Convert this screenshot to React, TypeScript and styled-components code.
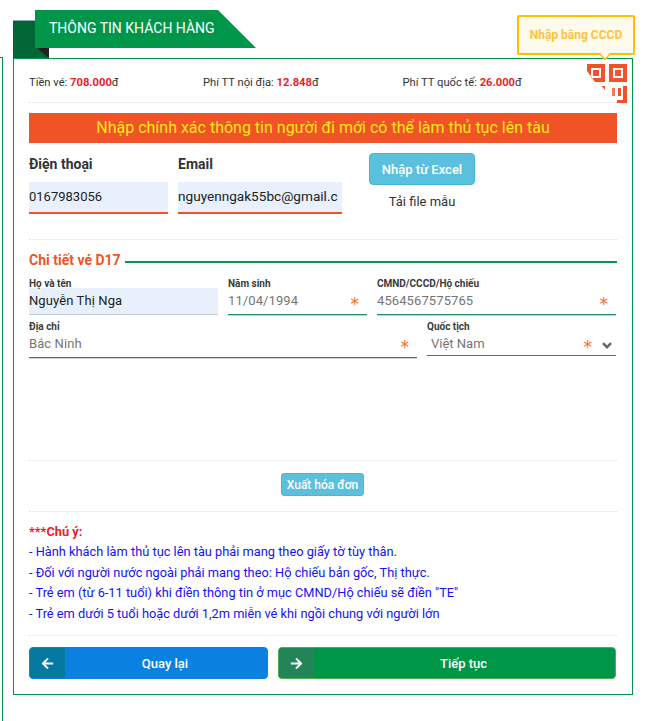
import styled, { createGlobalStyle } from "styled-components";
import { FaArrowLeft, FaArrowRight } from "react-icons/fa";

const GlobalStyle = createGlobalStyle`
  html, body {
    margin: 0;
    padding: 0;
    background: #fff;
    font-family: Roboto, "Liberation Sans", sans-serif;
    color: #333;
  }
`;

const Page = styled.div`
  display: flex;
  align-items: flex-start;
  width: 648px;
  height: 721px;
  overflow: hidden;
`;
const PrevEdge = styled.div`
  width: 2px;
  height: 664px;
  margin-top: 57px;
  border-top: 1px solid #00964a;
  border-right: 1px solid #00964a;
  flex: none;
`;
const Panel = styled.div`
  position: relative;
  flex: none;
  box-sizing: border-box;
  width: 620px;
  height: 637px;
  margin: 58px 0 0 10px;
  padding: 0 15px;
  border: 1px solid #00964a;
`;

// ribbon head
const RibbonBack = styled.div`
  position: absolute;
  left: -1px;
  top: -39px;
  width: 36px;
  height: 38px;
  background: #006633;
  border-top: 1px solid #8fa8b5;
  box-sizing: border-box;
`;
const RibbonFold = styled.div`
  position: absolute;
  left: 22px;
  top: -12px;
  width: 13px;
  height: 11px;
  background: #222;
  clip-path: polygon(0 0, 100% 0, 100% 100%);
`;
const Ribbon = styled.div`
  position: absolute;
  left: 21px;
  top: -49px;
  width: 183px;
  height: 38px;
  background: #00964a;
  color: #fff;
  font-size: 14px;
  line-height: 36px;
  padding-left: 14px;
  box-sizing: border-box;
  white-space: nowrap;
`;
const RibbonTail = styled.div`
  position: absolute;
  left: 204px;
  top: -49px;
  width: 38px;
  height: 38px;
  background: #00964a;
  clip-path: polygon(0 0, 100% 100%, 0 100%);
`;

// tooltip + qr
const CcdTip = styled.div`
  position: absolute;
  left: 503px;
  top: -44px;
  width: 118px;
  height: 40px;
  box-sizing: border-box;
  border: 2px solid #ffbf00;
  border-radius: 2px;
  background: #fffbec;
  color: #fdc33e;
  font-size: 12px;
  font-weight: 700;
  line-height: 36px;
  text-align: center;
  &::after {
    content: "";
    position: absolute;
    left: 81px;
    bottom: -7px;
    width: 8px;
    height: 8px;
    background: #fffbec;
    border-right: 2px solid #ffbf00;
    border-bottom: 2px solid #ffbf00;
    transform: rotate(45deg) scale(0.75);
  }
`;
const QrWrap = styled.div`
  position: absolute;
  left: 573px;
  top: 5px;
  width: 40px;
  height: 40px;
  line-height: 0;
`;

const FeeRow = styled.div`
  display: flex;
  height: 44px;
  padding-top: 3px;
  box-sizing: border-box;
  align-items: center;
  font-size: 11.2px;
  color: #333;
  border-bottom: 1px dotted #dfe3df;
`;
const Fee = styled.div<{ $w: number }>`
  width: ${(p) => p.$w}px;
  flex: none;
  b {
    color: #ee1c25;
    font-weight: 700;
  }
`;
const Banner = styled.div`
  height: 30px;
  margin-top: 10px;
  background: #f15327;
  color: #ffe81a;
  font-size: 16px;
  line-height: 30px;
  text-align: center;
`;
const ContactRow = styled.div`
  display: flex;
  margin-top: 10px;
`;
const ContactCol = styled.div<{ $w: number; $mr: number }>`
  width: ${(p) => p.$w}px;
  margin-right: ${(p) => p.$mr}px;
  flex: none;
`;
const ContactLabel = styled.div`
  height: 21px;
  margin-top: 1px;
  margin-bottom: 7px;
  font-size: 14px;
  font-weight: 700;
  line-height: 20px;
  color: #333;
`;
const ContactInput = styled.input<{ $size: number }>`
  display: block;
  width: 100%;
  height: 32px;
  box-sizing: border-box;
  padding: 0 4px 2px 0;
  border: 0;
  border-bottom: 2px solid #f15327;
  outline: 0;
  background: #e8f0fe;
  color: #222;
  font-family: inherit;
  font-size: ${(p) => p.$size}px;
`;
const ExcelButton = styled.button`
  display: block;
  width: 106px;
  height: 32px;
  box-sizing: border-box;
  border: 1px solid #46b8da;
  border-radius: 4px;
  background: #5bc0de;
  color: #fff;
  font-family: inherit;
  font-size: 13px;
  font-weight: 500;
  padding: 0;
`;
const FileLink = styled.div`
  margin-top: 9px;
  font-size: 13px;
  line-height: 16px;
  text-align: center;
  color: #333;
`;
const Dotted = styled.div<{ $mt: number }>`
  margin-top: ${(p) => p.$mt}px;
  border-top: 1px dotted #dfe3df;
`;
const SectionHead = styled.div`
  display: flex;
  align-items: center;
  gap: 4px;
  height: 20px;
  margin-top: 10px;
  color: #f15327;
  font-size: 14px;
  font-weight: 700;
  white-space: nowrap;
  &::after {
    content: "";
    flex: 1;
    height: 2px;
    margin-top: 3px;
    background: #00964a;
  }
`;
const FieldRow = styled.div<{ $mt: number }>`
  display: flex;
  gap: 10px;
  margin-top: ${(p) => p.$mt}px;
  width: 587px;
`;
const Field = styled.div<{ $w: number }>`
  position: relative;
  width: ${(p) => p.$w}px;
  flex: none;
`;
const FieldLabel = styled.div`
  position: relative;
  height: 10px;
  font-size: 10px;
  font-weight: 700;
  line-height: 10px;
  color: #3a3a3a;
  white-space: nowrap;
`;
const FieldInput = styled.input<{ $filled?: boolean }>`
  display: block;
  width: 100%;
  height: 27px;
  margin-top: -1px;
  box-sizing: border-box;
  padding: 0 0 2px;
  border: 0;
  border-bottom: 1px solid ${(p) => (p.$filled ? "#c5c9d2" : "#1f8a5b")};
  box-shadow: 0 1px 0 ${(p) => (p.$filled ? "transparent" : "#cfd4d1")};
  outline: 0;
  background: ${(p) => (p.$filled ? "#e8f0fe" : "#fff")};
  color: ${(p) => (p.$filled ? "#222" : "#757575")};
  font-family: inherit;
  font-size: 13px;
  letter-spacing: 0.1px;
`;
const FieldSelect = styled.select`
  display: block;
  width: 100%;
  height: 25px;
  margin-top: -1px;
  box-sizing: border-box;
  padding: 0 0 0 4px;
  border: 0;
  border-bottom: 1px solid #1f8a5b;
  outline: 0;
  appearance: none;
  background: #fff;
  color: #757575;
  font-family: inherit;
  font-size: 13px;
`;
const Star = styled.span<{ $right: number }>`
  position: absolute;
  right: ${(p) => p.$right}px;
  top: 15px;
  color: #ff6a13;
  font-family: "DejaVu Sans", sans-serif;
  font-size: 17px;
  line-height: 20px;
`;
const Chevron = styled.svg`
  position: absolute;
  right: 4px;
  top: 20px;
  width: 10px;
  height: 7px;
`;
const SmallButtonWrap = styled.div`
  display: flex;
  justify-content: center;
  margin-top: 12px;
  padding-right: 1px;
`;
const InvoiceButton = styled.button`
  width: 83px;
  height: 23px;
  box-sizing: border-box;
  border: 1px solid #46b8da;
  border-radius: 3px;
  background: #5bc0de;
  color: #fff;
  font-family: inherit;
  font-size: 12px;
  font-weight: 500;
  padding: 0;
`;
const Notes = styled.div`
  margin-top: 10px;
  font-size: 12.8px;
  line-height: 20.4px;
  color: #1414f0;
`;
const NoteTitle = styled.div`
  color: #ee1c25;
  font-weight: 700;
`;
const NavRow = styled.div`
  display: flex;
  gap: 10px;
  margin-top: 11px;
  width: 587px;
`;
const NavButton = styled.button<{ $bg: string; $icon: string; $w: number; $edge: string }>`
  display: flex;
  align-items: stretch;
  width: ${(p) => p.$w}px;
  height: 32px;
  padding: 0;
  box-sizing: border-box;
  border: 1px solid ${(p) => p.$edge};
  border-radius: 4px;
  overflow: hidden;
  background: ${(p) => p.$bg};
  color: #fff;
  font-family: inherit;
  font-size: 13px;
  font-weight: 500;
  span {
    width: 35px;
    flex: none;
    display: flex;
    align-items: center;
    justify-content: center;
    background: ${(p) => p.$icon};
    font-size: 13px;
  }
  em {
    flex: 1;
    font-style: normal;
    line-height: 31px;
    text-align: center;
    padding-right: 2px;
  }
`;

const notes = [
  "- Hành khách làm thủ tục lên tàu phải mang theo giấy tờ tùy thân.",
  "- Đối với người nước ngoài phải mang theo: Hộ chiếu bản gốc, Thị thực.",
  '- Trẻ em (từ 6-11 tuổi) khi điền thông tin ở mục CMND/Hộ chiếu sẽ điền "TE"',
  "- Trẻ em dưới 5 tuổi hoặc dưới 1,2m miễn vé khi ngồi chung với người lớn",
];

function QrIcon() {
  return (
    <svg width="40" height="40" viewBox="0 0 40 40" fill="#f15327">
      <path d="M0 0h18v18H8L0 7zM4 4v10h10V4z" fillRule="evenodd" />
      <rect x="6" y="6" width="6" height="6" />
      <path d="M22 0h18v18H22zM26 4v10h10V4z" fillRule="evenodd" />
      <rect x="28" y="6" width="6" height="6" />
      <path d="M14.500 22L18 22v4z" />
      <rect x="25" y="24" width="3" height="8" opacity="0.8" />
      <rect x="31" y="24" width="3" height="8" />
      <path d="M36 22h4v17H30v-3h6z" />
    </svg>
  );
}

function App() {
  return (
    <>
      <GlobalStyle />
      <Page>
        <PrevEdge />
        <Panel>
          <RibbonBack />
          <RibbonFold />
          <Ribbon>THÔNG TIN KHÁCH HÀNG</Ribbon>
          <RibbonTail />
          <CcdTip>Nhập bằng CCCD</CcdTip>
          <QrWrap>
            <QrIcon />
          </QrWrap>

          <FeeRow>
            <Fee $w={174}>
              Tiền vé: <b>708.000</b>đ
            </Fee>
            <Fee $w={199.500}>
              Phí TT nội địa: <b>12.848</b>đ
            </Fee>
            <Fee $w={190}>
              Phí TT quốc tế: <b>26.000</b>đ
            </Fee>
          </FeeRow>
          <Banner>Nhập chính xác thông tin người đi mới có thể làm thủ tục lên tàu</Banner>

          <ContactRow>
            <ContactCol $w={139} $mr={10}>
              <ContactLabel>Điện thoại</ContactLabel>
              <ContactInput $size={13} defaultValue="0167983056" readOnly />
            </ContactCol>
            <ContactCol $w={164} $mr={27}>
              <ContactLabel>Email</ContactLabel>
              <ContactInput $size={13.6} defaultValue="nguyenngak55bc@gmail.com" readOnly />
            </ContactCol>
            <ContactCol $w={106} $mr={0}>
              <ExcelButton>Nhập từ Excel</ExcelButton>
              <FileLink>Tải file mẫu</FileLink>
            </ContactCol>
          </ContactRow>

          <Dotted $mt={25} />
          <SectionHead>Chi tiết vé D17</SectionHead>

          <FieldRow $mt={9}>
            <Field $w={189}>
              <FieldLabel>Họ và tên</FieldLabel>
              <FieldInput $filled defaultValue="Nguyễn Thị Nga" readOnly />
            </Field>
            <Field $w={139}>
              <FieldLabel>Năm sinh</FieldLabel>
              <FieldInput defaultValue="11/04/1994" readOnly />
              <Star $right={8}>*</Star>
            </Field>
            <Field $w={239}>
              <FieldLabel>CMND/CCCD/Hộ chiếu</FieldLabel>
              <FieldInput defaultValue="4564567575765" readOnly />
              <Star $right={8}>*</Star>
            </Field>
          </FieldRow>
          <FieldRow $mt={7}>
            <Field $w={388}>
              <FieldLabel>Địa chỉ</FieldLabel>
              <FieldInput defaultValue="Bắc Ninh" readOnly />
              <Star $right={8}>*</Star>
            </Field>
            <Field $w={189}>
              <FieldLabel>Quốc tịch</FieldLabel>
              <FieldSelect defaultValue="vn">
                <option value="vn">Việt Nam</option>
              </FieldSelect>
              <Star $right={24}>*</Star>
              <Chevron viewBox="0 0 10 7" fill="none" stroke="#666" strokeWidth="2.4">
                <path d="M1 1.200l4 4 4-4" />
              </Chevron>
            </Field>
          </FieldRow>

          <Dotted $mt={102} />
          <SmallButtonWrap>
            <InvoiceButton>Xuất hóa đơn</InvoiceButton>
          </SmallButtonWrap>
          <Dotted $mt={15} />

          <Notes>
            <NoteTitle>***Chú ý:</NoteTitle>
            {notes.map((n) => (
              <div key={n}>{n}</div>
            ))}
          </Notes>

          <Dotted $mt={11} />
          <NavRow>
            <NavButton $w={239} $bg="#0a80e0" $icon="#05799f" $edge="#0a80e0">
              <span>
                <FaArrowLeft />
              </span>
              <em>Quay lại</em>
            </NavButton>
            <NavButton $w={338} $bg="#00964a" $icon="#238557" $edge="#4cae4c">
              <span>
                <FaArrowRight />
              </span>
              <em>Tiếp tục</em>
            </NavButton>
          </NavRow>
        </Panel>
      </Page>
    </>
  );
}

export default App;
